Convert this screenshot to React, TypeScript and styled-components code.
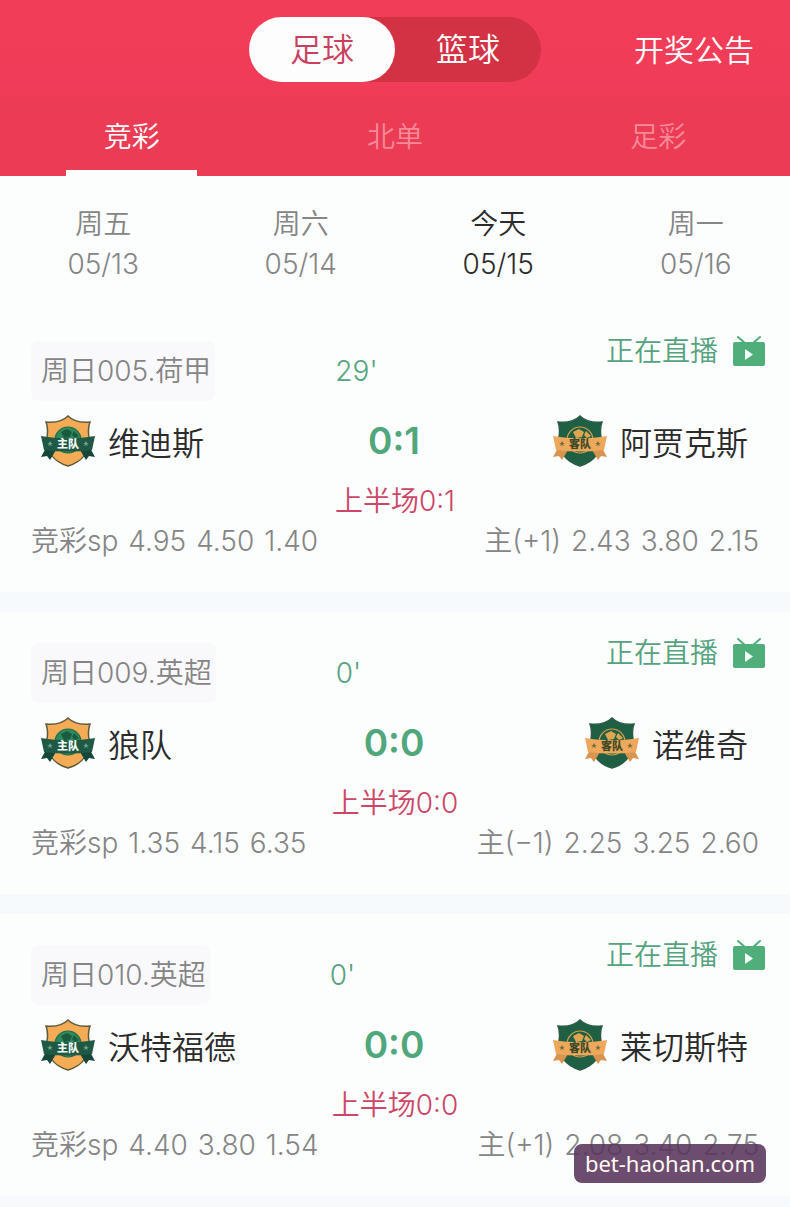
import { useState } from 'react';
import styled, { createGlobalStyle } from 'styled-components';

interface IOdds {
  label: string;
  values: string[];
}

interface IMatch {
  id: string;
  league: string;
  minute: string;
  home: string;
  away: string;
  score: string;
  half: string;
  odds: IOdds;
  handicap: IOdds;
}

const sports = ['足球', '篮球'];
const lotteries = ['竞彩', '北单', '足彩'];

const days = [
  { name: '周五', date: '05/13' },
  { name: '周六', date: '05/14' },
  { name: '今天', date: '05/15' },
  { name: '周一', date: '05/16' },
];

const matches: IMatch[] = [
  {
    id: '005', league: '周日005.荷甲', minute: "29'",
    home: '维迪斯', away: '阿贾克斯', score: '0:1', half: '上半场0:1',
    odds: { label: '竞彩sp', values: ['4.95', '4.50', '1.40'] },
    handicap: { label: '主(+1)', values: ['2.43', '3.80', '2.15'] },
  },
  {
    id: '009', league: '周日009.英超', minute: "0'",
    home: '狼队', away: '诺维奇', score: '0:0', half: '上半场0:0',
    odds: { label: '竞彩sp', values: ['1.35', '4.15', '6.35'] },
    handicap: { label: '主(−1)', values: ['2.25', '3.25', '2.60'] },
  },
  {
    id: '010', league: '周日010.英超', minute: "0'",
    home: '沃特福德', away: '莱切斯特', score: '0:0', half: '上半场0:0',
    odds: { label: '竞彩sp', values: ['4.40', '3.80', '1.54'] },
    handicap: { label: '主(+1)', values: ['2.08', '3.40', '2.75'] },
  },
];

const Crest = ({ away }: { away?: boolean }) => {
  const shield = away ? '#1f5f43' : '#f3ab55';
  const edge = away ? '#2b5c45' : '#5d5a3a';
  const ribbon = away ? '#eda85c' : '#1f5945';
  const fold = away ? '#d8954f' : '#17463a';
  const ball = away ? '#dba04e' : '#2f8a5b';
  return (
    <CrestSvg viewBox="0 0 56 52" aria-hidden="true">
      <path d="M28 1c5 5 12 7 22 6-2 5-2 9-1 15 1 15-7 25-21 29C14 47 6 37 7 22c1-6 1-10-1-15 10 1 17-1 22-6z"
        fill={shield} stroke={edge} strokeWidth="1.5" />
      <circle cx="28" cy="25" r="13" fill={away ? '#1f5f43' : ball} stroke={away ? ball : '#1f6b4a'} strokeWidth="1.2" />
      <path d="M21 17l6-3 5 3-2 5-6 1zM34 16l5 5-4 2-3-3z" fill={away ? '#e2a54f' : '#195a40'} />
      <path d="M7 31L1 42l6-1 3 4 6-10zM49 31l6 11-6-1-3 4-6-10z" fill={fold} />
      <path d="M1 21c18 3 36 3 54 0l-3 14c-16 2-32 2-48 0z" fill={ribbon} />
      <path d="M10 26l1 2h2l-2 1 1 2-2-1-2 1 1-2-2-1h2zM46 26l1 2h2l-2 1 1 2-2-1-2 1 1-2-2-1h2z"
        fill={away ? '#6b6b3a' : '#6fa58c'} />
      <text x="28" y="33" textAnchor="middle" fontSize="11" fontWeight="900"
        fill={away ? '#3d4a28' : '#f2fbf4'}>{away ? '客队' : '主队'}</text>
    </CrestSvg>
  );
};

const LiveIcon = () => (
  <LiveSvg viewBox="0 0 34 32" aria-hidden="true">
    <path d="M6 2l8 7M28 2l-8 7" stroke="#4fae7a" strokeWidth="2" strokeLinecap="round" fill="none" />
    <rect x="1" y="7" width="32" height="24" rx="2" fill="#4fae7a" />
    <path d="M13 14v11l8-5.500z" fill="#f4fff8" />
  </LiveSvg>
);

const Odds = ({ label, values }: IOdds) => (
  <OddsGroup>
    <span>{label}</span>
    {values.map((value, index) => <span key={index}>{value}</span>)}
  </OddsGroup>
);

const Match = (props: IMatch) => (
  <Card>
    <InfoRow>
      <League>{props.league}</League>
      <Minute>{props.minute}</Minute>
      <Live href="#live">正在直播<LiveIcon /></Live>
    </InfoRow>
    <TeamRow>
      <Team><Crest /><TeamName>{props.home}</TeamName></Team>
      <Score>{props.score}</Score>
      <Team $end><Crest away /><TeamName>{props.away}</TeamName></Team>
    </TeamRow>
    <Half>{props.half}</Half>
    <OddsRow>
      <Odds {...props.odds} />
      <Odds {...props.handicap} />
    </OddsRow>
  </Card>
);

const App = () => {
  const [sport, setSport] = useState<number>(0);
  const [lottery, setLottery] = useState<number>(0);
  const [day, setDay] = useState<number>(2);

  return (
    <Page>
      <GlobalStyle />
      <Header>
        <TopBar>
          <Switch>
            {sports.map((name, index) => (
              <SwitchButton key={name} $active={index === sport} onClick={() => setSport(index)}>{name}</SwitchButton>
            ))}
          </Switch>
          <Notice href="#results">开奖公告</Notice>
        </TopBar>
        <Tabs>
          {lotteries.map((name, index) => (
            <Tab key={name} $active={index === lottery} onClick={() => setLottery(index)}>{name}</Tab>
          ))}
        </Tabs>
      </Header>

      <Days>
        {days.map((d, index) => (
          <Day key={d.date} $active={index === day} onClick={() => setDay(index)}>
            <span>{d.name}</span>
            <span>{d.date}</span>
          </Day>
        ))}
      </Days>

      <MatchList>
        {matches.map(match => <Match key={match.id} {...match} />)}
      </MatchList>

      <SiteBadge>bet-haohan.com</SiteBadge>
    </Page>
  );
}

const GlobalStyle = createGlobalStyle`
  * {
    box-sizing: border-box;
  }

  body {
    margin: 0;
    background: #f7fafd;
    font-family: Inter, "Noto Sans CJK SC", sans-serif;
    font-weight: 350;
  }

  button {
    border: 0;
    padding: 0;
    background: none;
    font: inherit;
    cursor: pointer;
  }

  a {
    text-decoration: none;
  }
`;

const Page = styled.div`
  position: relative;
  font-size: 28px;
  line-height: 40px;
  color: #858585;
`;

const Header = styled.header`
  background: linear-gradient(#f23d59 0, #f03c58 90px, #ec3b54 100px, #ec3b54 100%);
  color: #fff;
`;

const TopBar = styled.div`
  display: grid;
  grid-template-columns: 1fr auto 1fr;
  align-items: center;
  height: 96px;
  padding: 3px 36px 0;
`;

const Switch = styled.div`
  grid-column: 2;
  display: flex;
  border-radius: 33px;
  background: #d33244;
`;

const SwitchButton = styled.button<{ $active: boolean }>`
  width: 146px;
  height: 65px;
  border-radius: 33px;
  font-size: 32px;
  background: ${p => p.$active ? '#fdfdfe' : 'transparent'};
  color: ${p => p.$active ? '#c9405f' : '#fff'};
`;

const Notice = styled.a`
  justify-self: end;
  font-size: 30px;
  color: #fff;
`;

const Tabs = styled.nav`
  display: flex;
  height: 80px;
`;

const Tab = styled.button<{ $active: boolean }>`
  flex: 1;
  display: flex;
  flex-direction: column;
  align-items: center;
  justify-content: space-between;
  padding-top: 21px;
  color: ${p => p.$active ? '#fff' : '#f58a98'};

  &::after {
    content: "";
    width: 50%;
    height: 6px;
    background: ${p => p.$active ? '#fff' : 'transparent'};
  }
`;

const Days = styled.nav`
  display: flex;
  height: 134px;
  background: #fcfdfd;
`;

const Day = styled.button<{ $active: boolean }>`
  flex: 1;
  display: flex;
  flex-direction: column;
  align-items: center;
  padding: 28px 0 0 9px;
  color: ${p => p.$active ? '#2b2b2b' : '#858585'};
`;

const MatchList = styled.main`
  display: flex;
  flex-direction: column;
  gap: 20px;
  padding-bottom: 11px;
`;

const Card = styled.article`
  padding: 21px 24px 31px 31px;
  background: #fcfdfd;
`;

const InfoRow = styled.div`
  display: flex;
  align-items: flex-start;
`;

const League = styled.span`
  margin-top: 10px;
  padding: 10px 4px 10px 10px;
  border-radius: 8px;
  background: #f9f9fb;
`;

const Minute = styled.span`
  margin: 20px 0 0 120px;
  color: #55a37d;
`;

const Live = styled.a`
  display: flex;
  align-items: center;
  gap: 14px;
  margin-left: auto;
  color: #55a37d;
`;

const LiveSvg = styled.svg`
  width: 34px;
  height: 32px;
`;

const TeamRow = styled.div`
  display: grid;
  grid-template-columns: 1fr auto 1fr;
  align-items: center;
  height: 80px;
  padding: 0 18px 0 9px;
`;

const Team = styled.div<{ $end?: boolean }>`
  display: flex;
  align-items: center;
  justify-self: ${p => p.$end ? 'end' : 'start'};
  gap: 12px;
  font-size: 32px;
  color: #2b2b2b;
`;

const TeamName = styled.span`
  padding-top: 6px;
`;

const CrestSvg = styled.svg`
  width: 56px;
  height: 52px;
`;

const Score = styled.strong`
  font-size: 37px;
  font-weight: 600;
  color: #4fa77b;
`;

const Half = styled.div`
  padding-right: 7px;
  text-align: center;
  color: #cc4667;
`;

const OddsRow = styled.div`
  display: flex;
  justify-content: space-between;
  padding-right: 7px;
`;

const OddsGroup = styled.div`
  display: flex;
  gap: 10px;
`;

const SiteBadge = styled.div`
  position: absolute;
  right: 24px;
  bottom: 24px;
  padding: 0 11px;
  border-radius: 8px;
  background: rgba(88, 52, 92, 0.88);
  font-family: "Noto Sans", sans-serif;
  font-size: 22px;
  font-weight: 400;
  line-height: 39px;
  color: #fffaf0;
`;

export default App
